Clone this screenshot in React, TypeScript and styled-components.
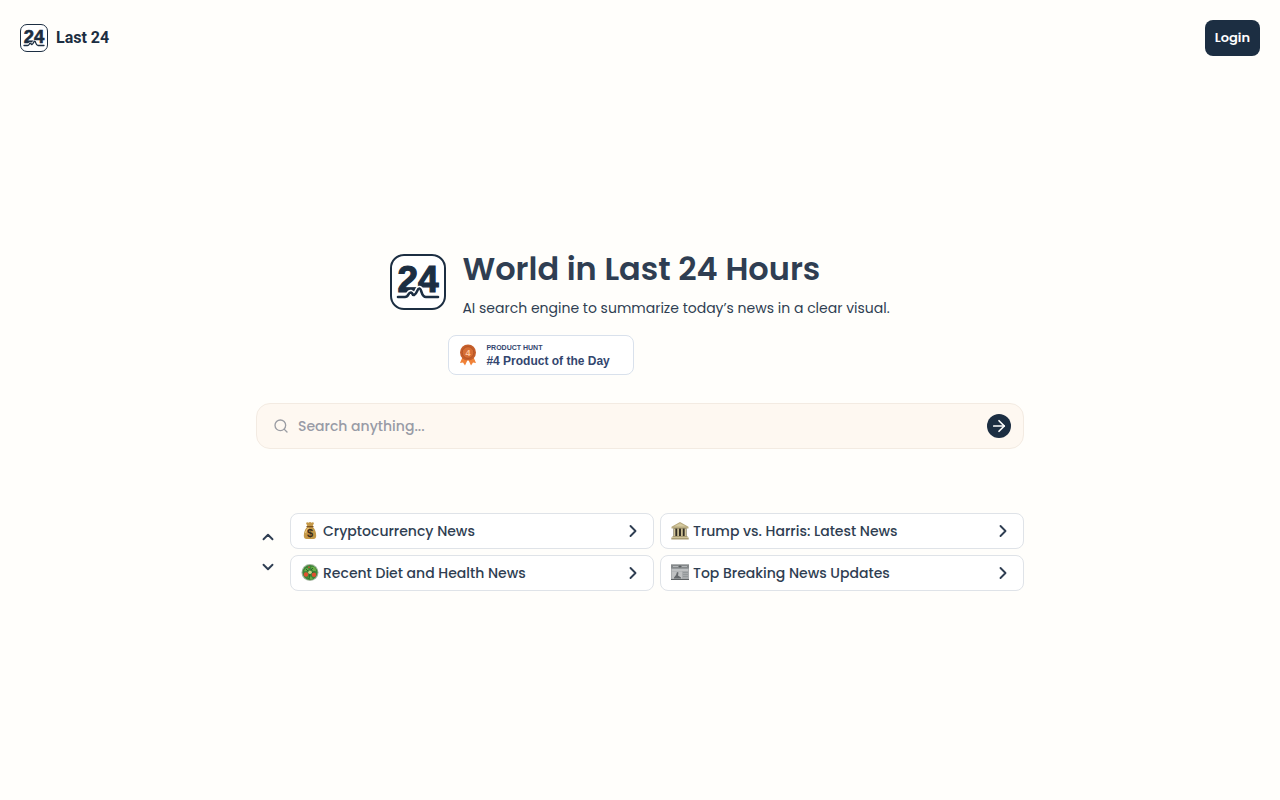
import React from "react";
import styled, { createGlobalStyle } from "styled-components";
import { ArrowRight, ChevronDown, ChevronRight, ChevronUp, Search } from "lucide-react";

const navy = "#1c2e42";
const slate = "#2f3e52";
const sans = `Poppins, Inter, "Open Sans", sans-serif`;

const GlobalStyle = createGlobalStyle`
  *, *::before, *::after { box-sizing: border-box; }
  body {
    margin: 0;
    background: #fffefb;
    color: ${slate};
    font-family: ${sans};
  }
  h1, p, ul { margin: 0; padding: 0; }
  button, input { font: inherit; color: inherit; }
  button { cursor: pointer; }
`;

const Header = styled.header`
  display: flex;
  align-items: center;
  justify-content: space-between;
  padding: 20px;
`;

const Brand = styled.a`
  display: flex;
  align-items: center;
  gap: 8px;
  color: ${navy};
  font: 700 16px/20px Roboto, sans-serif;
  text-decoration: none;
`;

const LoginButton = styled.button`
  height: 36px;
  padding: 0 10px;
  border: 0;
  border-radius: 8px;
  background: ${navy};
  color: #fff;
  font-size: 13px;
  font-weight: 600;
`;

const Main = styled.main`
  display: flex;
  flex-direction: column;
  align-items: center;
  width: 60%;
  min-width: 320px;
  margin: 0 auto;
  padding: 170px 0 40px;
`;

const Hero = styled.section`
  display: flex;
  flex-direction: column;
  align-items: flex-start;
`;

const HeroTop = styled.div`
  display: flex;
  align-items: center;
  gap: 16px;
`;

const Title = styled.h1`
  font-size: 32px;
  line-height: 46px;
  font-weight: 600;
`;

const Tagline = styled.p`
  margin-top: 6px;
  font-size: 14px;
  line-height: 20px;
`;

const AwardBadge = styled.a`
  display: flex;
  align-items: center;
  gap: 9px;
  width: 186px;
  height: 40px;
  margin: 17px 0 0 58px;
  padding: 0 10px;
  border: 1px solid #d9e1ec;
  border-radius: 8px;
  background: #fff;
  color: #33466f;
  font-family: "Liberation Sans", sans-serif;
  font-weight: 700;
  text-decoration: none;
`;

const AwardText = styled.span`
  display: flex;
  flex-direction: column;
  padding-top: 1px;
`;

const AwardSource = styled.span`
  font-size: 7px;
  line-height: 10px;
`;

const AwardRank = styled.span`
  font-size: 12px;
  line-height: 16px;
`;

const SearchForm = styled.form`
  display: flex;
  align-items: center;
  gap: 9px;
  width: 100%;
  height: 46px;
  margin-top: 28px;
  padding: 0 12px 0 16px;
  border: 1px solid #f3ebe2;
  border-radius: 14px;
  background: #fef8f1;
  color: #9a9ca3;
`;

const SearchInput = styled.input`
  flex: 1;
  min-width: 0;
  padding: 0;
  border: 0;
  outline: 0;
  background: none;
  color: ${slate};
  font-size: 14px;
  font-weight: 500;
  &::placeholder { color: #989ba6; opacity: 1; }
`;

const SubmitButton = styled.button`
  display: grid;
  place-items: center;
  width: 24px;
  height: 24px;
  padding: 0;
  border: 0;
  border-radius: 50%;
  background: ${navy};
  color: #fff;
`;

const Topics = styled.section`
  display: flex;
  align-items: center;
  gap: 10px;
  width: 100%;
  margin-top: 64px;
`;

const Pager = styled.div`
  display: flex;
  flex-direction: column;
  gap: 6px;
`;

const PagerButton = styled.button`
  display: grid;
  place-items: center;
  width: 24px;
  height: 24px;
  padding: 0;
  border: 0;
  background: none;
`;

const TopicGrid = styled.ul`
  display: grid;
  flex: 1;
  grid-template-columns: 1fr 1fr;
  gap: 6px;
  list-style: none;
`;

const TopicButton = styled.button`
  display: flex;
  align-items: center;
  gap: 4px;
  width: 100%;
  height: 36px;
  padding: 0 10px;
  border: 1px solid #dfe3e8;
  border-radius: 8px;
  background: #fff;
  font-size: 14px;
  font-weight: 500;
  text-align: left;
`;

const TopicLabel = styled.span`
  flex: 1;
`;

function Logo({ size }: { size: number }) {
  return (
    <svg width={size} height={size} viewBox="0 0 56 56" aria-hidden="true">
      <rect x="1" y="1" width="54" height="54" rx="13" fill="#fff" stroke={navy} strokeWidth="2" />
      <text x="28" y="38" textAnchor="middle" fill={navy} stroke={navy} strokeWidth="1.2" fontFamily="Liberation Sans, sans-serif" fontWeight="700" fontSize="37">24</text>
      <path d="M8 43H15C19 43 18 38 21 38.500C23 39 22 41.500 24 41C28 39 27 34 29.500 34.500C32 35 31 43 36 43H48" fill="none" stroke="#fff" strokeWidth="5.400" />
      <path d="M8 43H15C19 43 18 38 21 38.500C23 39 22 41.500 24 41C28 39 27 34 29.500 34.500C32 35 31 43 36 43H48" fill="none" stroke={navy} strokeWidth="2.600" strokeLinecap="round" strokeLinejoin="round" />
    </svg>
  );
}

function Medal() {
  return (
    <svg width="18" height="22" viewBox="0 0 18 22" aria-hidden="true">
      <path d="M4 12L1 19L4 18.500L6 21.500L9 15L12 21.500L14 18.500L17 19L14 12Z" fill="#f08238" />
      <circle cx="9" cy="8.500" r="8" fill="#c65f2b" />
      <circle cx="9" cy="8.500" r="5.800" fill="#d66e34" stroke="#ad4f25" strokeWidth="0.800" />
      <text x="9" y="12" textAnchor="middle" fontFamily="Liberation Sans, sans-serif" fontSize="9" fill="#ffc49a">4</text>
    </svg>
  );
}

function MoneyBag() {
  return (
    <svg width="18" height="18" viewBox="0 0 18 18" aria-hidden="true">
      <path d="M6.500 4.500L5 1Q6.300 -0.300 7.500 0.700Q9 -0.500 10.500 0.700Q12 -0.300 13 1L11.500 4.500Q15.300 8.500 15.200 14Q15 17 12.500 17H5.500Q3 17 2.800 14Q2.700 8.500 6.500 4.500Z" fill="#c49848" />
      <path d="M4.500 11Q5.500 7 8 6" fill="none" stroke="#e7c67d" strokeWidth="1.300" />
      <path d="M6 4.600H12" stroke="#7d5322" strokeWidth="1.400" strokeLinecap="round" />
      <text x="9" y="14.800" textAnchor="middle" fontFamily="Liberation Sans, sans-serif" fontWeight="700" fontSize="11" fill="#3d2d18">$</text>
    </svg>
  );
}

function Salad() {
  return (
    <svg width="18" height="18" viewBox="0 0 18 18" aria-hidden="true">
      <circle cx="9" cy="8.500" r="8.500" fill="#a3b59f" />
      <circle cx="9" cy="8.500" r="7.500" fill="#3d8637" />
      <path d="M3 7Q5 2 8 5Q6 8 3 7ZM10 3Q15 2 15 7Q11 8 10 3ZM7 13Q10 11 12 15Q9 17 7 13Z" fill="#69ad46" />
      <path d="M5 5L8 8L12 4M9 9L14 8M9 9L8 15" fill="none" stroke="#27652b" strokeWidth="1" />
      <circle cx="5" cy="10.500" r="2.200" fill="#e0512f" />
      <circle cx="13" cy="10.700" r="2.200" fill="#e0512f" />
      <circle cx="9" cy="8.300" r="1.800" fill="#c9d887" />
      <circle cx="8" cy="3.300" r="1" fill="#bf5b38" />
    </svg>
  );
}

function Monument() {
  return (
    <svg width="18" height="18" viewBox="0 0 18 18" aria-hidden="true">
      <path d="M2.500 5H15.500V14.500H2.500Z" fill="#332e25" />
      <path d="M0.500 4.800L9 0L17.500 4.800V6.500H0.500Z" fill="#b8ab80" />
      <path d="M3 4.500L9 1.200L15 4.500Z" fill="#d5ca9f" />
      <path d="M3.500 6.500V14.500M7.100 6.500V14.500M10.900 6.500V14.500M14.500 6.500V14.500" stroke="#d0c397" strokeWidth="1.700" />
      <path d="M1.500 14H16.500V15.500H17.700V17.500H0.300V15.500H1.500Z" fill="#a99c73" />
      <path d="M1 15.500H17" stroke="#ddd2ab" strokeWidth="0.700" />
    </svg>
  );
}

function Newspaper() {
  return (
    <svg width="18" height="18" viewBox="0 0 18 18" aria-hidden="true">
      <path d="M0 0.500H18V16H0Z" fill="#a8abad" />
      <path d="M0 0.500H18V4.500H0Z" fill="#85898b" />
      <path d="M2 2.500H7M11 2.500H16" stroke="#b3b6b8" />
      <circle cx="9" cy="2.500" r="1.100" fill="#5b5f61" />
      <path d="M1 6H17" stroke="#d5d7d8" />
      <path d="M1 7.500H11V14.500H1Z" fill="#bfc1c2" />
      <path d="M3 13.500L5 11L6 8L7.500 8.500L7 11.500L10 13.500V14.500H3Z" fill="#666a6d" />
      <path d="M12 8.500H17M12 10.500H17M12 12.500H17" stroke="#929698" strokeWidth="0.900" />
      <path d="M0 15.500H18" stroke="#5f6365" />
    </svg>
  );
}

const topics = [
  { label: "Cryptocurrency News", Icon: MoneyBag },
  { label: "Trump vs. Harris: Latest News", Icon: Monument },
  { label: "Recent Diet and Health News", Icon: Salad },
  { label: "Top Breaking News Updates", Icon: Newspaper },
];

export default function App() {
  return (
    <>
      <GlobalStyle />
      <Header>
        <Brand href="#">
          <Logo size={28} />
          Last 24
        </Brand>
        <LoginButton type="button">Login</LoginButton>
      </Header>
      <Main>
        <Hero>
          <HeroTop>
            <Logo size={56} />
            <div>
              <Title>World in Last 24 Hours</Title>
              <Tagline>AI search engine to summarize today’s news in a clear visual.</Tagline>
            </div>
          </HeroTop>
          <AwardBadge href="#">
            <Medal />
            <AwardText>
              <AwardSource>PRODUCT HUNT</AwardSource>
              <AwardRank>#4 Product of the Day</AwardRank>
            </AwardText>
          </AwardBadge>
        </Hero>
        <SearchForm onSubmit={(event) => event.preventDefault()}>
          <Search size={16} strokeWidth={2} />
          <SearchInput type="text" aria-label="Search" placeholder="Search anything..." />
          <SubmitButton type="submit" aria-label="Submit search">
            <ArrowRight size={18} strokeWidth={2.25} />
          </SubmitButton>
        </SearchForm>
        <Topics aria-label="Suggested topics">
          <Pager>
            <PagerButton type="button" aria-label="Previous topics">
              <ChevronUp size={18} strokeWidth={2.5} />
            </PagerButton>
            <PagerButton type="button" aria-label="Next topics">
              <ChevronDown size={18} strokeWidth={2.5} />
            </PagerButton>
          </Pager>
          <TopicGrid>
            {topics.map(({ label, Icon }) => (
              <li key={label}>
                <TopicButton type="button">
                  <Icon />
                  <TopicLabel>{label}</TopicLabel>
                  <ChevronRight size={20} strokeWidth={2.25} />
                </TopicButton>
              </li>
            ))}
          </TopicGrid>
        </Topics>
      </Main>
    </>
  );
}
